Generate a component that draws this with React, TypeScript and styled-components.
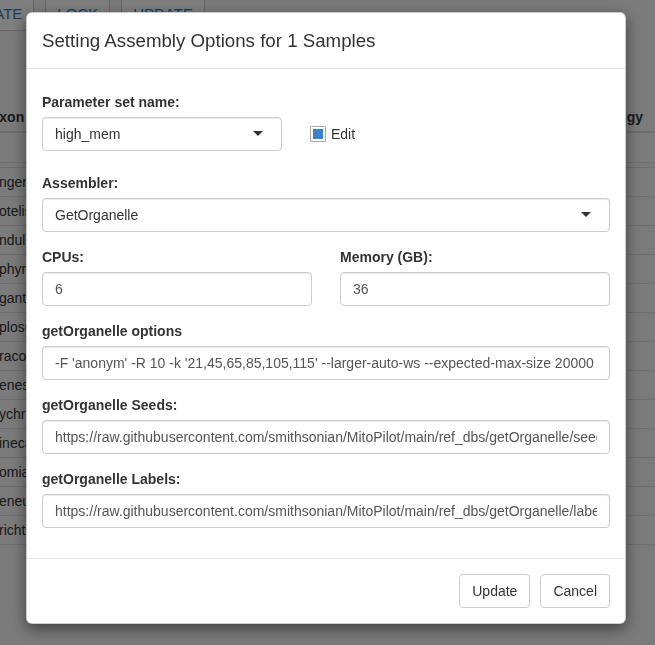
import React from 'react';
import styled, { createGlobalStyle } from 'styled-components';

const GlobalStyle = createGlobalStyle`
  * { box-sizing: border-box; }
  html, body { margin: 0; padding: 0; }
  body {
    background: #f7f7f7;
    font-family: "Liberation Sans", Arial, Helvetica, sans-serif;
    font-size: 14px;
    line-height: 20px;
    color: #333;
    overflow: hidden;
  }
`;

const rows = [
  'ngeri', 'otelis', 'ndulus', 'phyrus', 'gantus', 'plosus', 'racoda',
  'enesis', 'ychrus', 'ineca', 'omias', 'eneus', 'richtys',
];

const App: React.FC = () => {
  return (
    <>
      <GlobalStyle />
      <Page>
        <Toolbar>
          <ToolButton $shift={-60}>VALIDATE</ToolButton>
          <ToolButton>LOCK</ToolButton>
          <ToolButton>UPDATE</ToolButton>
        </Toolbar>
        <Table>
          <HeaderRow>
            <HeadCell $shift={-16}>Taxon</HeadCell>
            <HeadCell>Ontology</HeadCell>
          </HeaderRow>
          <FilterRow />
          <TableBody>
            {rows.map((r) => (
              <BodyRow key={r}>
                <BodyCell>{r}</BodyCell>
              </BodyRow>
            ))}
          </TableBody>
        </Table>
      </Page>

      <Backdrop />
      <ModalLayer>
        <Modal>
          <ModalHeader>
            <Title>Setting Assembly Options for 1 Samples</Title>
          </ModalHeader>
          <ModalBody>
            <FormGroup $space={22}>
              <Label>Parameter set name:</Label>
              <InlineRow>
                <Select $width={240}>
                  <SelectValue>high_mem</SelectValue>
                  <Caret />
                </Select>
                <CheckWrap>
                  <CheckBox>
                    <CheckFill />
                  </CheckBox>
                  <CheckLabel>Edit</CheckLabel>
                </CheckWrap>
              </InlineRow>
            </FormGroup>

            <FormGroup>
              <Label>Assembler:</Label>
              <Select>
                <SelectValue>GetOrganelle</SelectValue>
                <Caret />
              </Select>
            </FormGroup>

            <TwoCols>
              <FormGroup>
                <Label>CPUs:</Label>
                <TextInput readOnly value="6" />
              </FormGroup>
              <FormGroup>
                <Label>Memory (GB):</Label>
                <TextInput readOnly value="36" />
              </FormGroup>
            </TwoCols>

            <FormGroup>
              <Label>getOrganelle options</Label>
              <TextInput
                readOnly
                value="-F 'anonym' -R 10 -k '21,45,65,85,105,115' --larger-auto-ws --expected-max-size 20000 --target-genome-size 16000"
              />
            </FormGroup>

            <FormGroup>
              <Label>getOrganelle Seeds:</Label>
              <TextInput
                readOnly
                value="https://raw.githubusercontent.com/smithsonian/MitoPilot/main/ref_dbs/getOrganelle/seeds/universal.fasta"
              />
            </FormGroup>

            <FormGroup>
              <Label>getOrganelle Labels:</Label>
              <TextInput
                readOnly
                value="https://raw.githubusercontent.com/smithsonian/MitoPilot/main/ref_dbs/getOrganelle/labels/universal.fasta"
              />
            </FormGroup>
          </ModalBody>
          <ModalFooter>
            <FooterButton>Update</FooterButton>
            <FooterButton>Cancel</FooterButton>
          </ModalFooter>
        </Modal>
      </ModalLayer>
    </>
  );
};

/* page behind the dialog */

const Page = styled.div`
  width: 655px;
  height: 645px;
  overflow: hidden;
`;

const Toolbar = styled.div`
  display: flex;
  gap: 11px;
  margin-top: -4px;
  height: 35px;
`;

const ToolButton = styled.div<{ $shift?: number }>`
  display: flex;
  align-items: center;
  height: 35px;
  padding: 0 11px;
  margin-left: ${(p) => (p.$shift ? `${p.$shift}px` : '0')};
  background: #fff;
  border: 1px solid #ccc;
  border-radius: 4px;
  color: #337ab7;
  font-size: 15px;
  white-space: nowrap;
`;

const Table = styled.div`
  margin-top: 71px;
  width: 100%;
`;

const HeaderRow = styled.div`
  display: flex;
  justify-content: space-between;
  padding: 5px 12px 4px 0;
  font-weight: 700;
  border-bottom: 2px solid #ddd;
`;

const HeadCell = styled.div<{ $shift?: number }>`
  margin-left: ${(p) => (p.$shift ? `${p.$shift}px` : '0')};
  white-space: nowrap;
`;

const FilterRow = styled.div`
  height: 30px;
  border-bottom: 1px solid #ddd;
  margin-bottom: 4px;
`;

const TableBody = styled.div`
  border-top: 1px solid #ddd;
`;

const BodyRow = styled.div`
  display: flex;
  align-items: center;
  height: 29px;
  border-bottom: 1px solid #ddd;
`;

const BodyCell = styled.div`
  margin-left: -1px;
  white-space: nowrap;
`;

/* modal */

const Backdrop = styled.div`
  position: fixed;
  inset: 0;
  background: rgba(0, 0, 0, 0.5);
`;

const ModalLayer = styled.div`
  position: fixed;
  inset: 0;
  padding: 12px 0 0 26px;
`;

const Modal = styled.div`
  width: 600px;
  background: #fff;
  border: 1px solid rgba(0, 0, 0, 0.2);
  border-radius: 6px;
  box-shadow: 0 5px 15px rgba(0, 0, 0, 0.5);
`;

const ModalHeader = styled.div`
  padding: 15px;
  border-bottom: 1px solid #e5e5e5;
`;

const Title = styled.h4`
  margin: 0;
  font-size: 18.7px;
  line-height: 25px;
  font-weight: 400;
  color: #333;
`;

const ModalBody = styled.div`
  padding: 23px 15px 15px;
`;

const FormGroup = styled.div<{ $space?: number }>`
  margin-bottom: ${(p) => p.$space ?? 15}px;
`;

const Label = styled.div`
  font-weight: 700;
  margin-bottom: 5px;
`;

const InlineRow = styled.div`
  display: flex;
  align-items: center;
`;

const Select = styled.div<{ $width?: number }>`
  display: flex;
  align-items: center;
  width: ${(p) => (p.$width ? `${p.$width}px` : '100%')};
  height: 34px;
  padding: 0 18px 0 12px;
  border: 1px solid #ccc;
  border-radius: 4px;
  background: #fff;
  box-shadow: inset 0 1px 1px rgba(0, 0, 0, 0.075);
`;

const SelectValue = styled.span`
  color: #333;
`;

const Caret = styled.span`
  margin-left: auto;
  margin-top: -2px;
  width: 0;
  height: 0;
  border-left: 5px solid transparent;
  border-right: 5px solid transparent;
  border-top: 5px solid #333;
`;

const CheckWrap = styled.label`
  display: flex;
  align-items: center;
  margin-left: 28px;
`;

const CheckBox = styled.span`
  display: block;
  width: 16px;
  height: 16px;
  padding: 2px;
  border: 1px solid #a9a9a9;
  border-radius: 1px;
  background: #fff;
`;

const CheckFill = styled.span`
  display: block;
  width: 100%;
  height: 100%;
  background: #3b80cb;
`;

const CheckLabel = styled.span`
  margin-left: 5px;
`;

const TwoCols = styled.div`
  display: grid;
  grid-template-columns: 1fr 1fr;
  column-gap: 28px;
`;

const TextInput = styled.input`
  display: block;
  width: 100%;
  height: 34px;
  padding: 6px 12px;
  font-family: inherit;
  font-size: 14px;
  color: #555;
  background: #fff;
  border: 1px solid #ccc;
  border-radius: 4px;
  box-shadow: inset 0 1px 1px rgba(0, 0, 0, 0.075);
  outline: none;
`;

const ModalFooter = styled.div`
  display: flex;
  justify-content: flex-end;
  gap: 10px;
  padding: 15px;
  border-top: 1px solid #e5e5e5;
`;

const FooterButton = styled.button`
  height: 34px;
  padding: 6px 12px;
  font-family: inherit;
  font-size: 14px;
  color: #333;
  background: #fff;
  border: 1px solid #ccc;
  border-radius: 4px;
`;

export default App;
